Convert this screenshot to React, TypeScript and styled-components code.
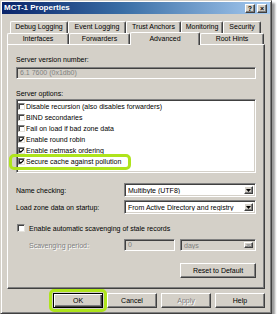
import React from 'react';
import styled, { createGlobalStyle, css } from 'styled-components';

const Global = createGlobalStyle`
  html, body { margin: 0; padding: 0; background: #ffffff; }
  body {
    font-family: "Liberation Sans", Arial, sans-serif;
    font-size: 7px;
    color: #000;
  }
  * { box-sizing: border-box; }
`;

const FACE = '#d4d0c8';
const GREEN = '#aee41c';

const raised = css`
  border: 1px solid;
  border-color: #ffffff #404040 #404040 #ffffff;
  box-shadow: inset -1px -1px #808080;
`;

const sunken = css`
  border: 1px solid;
  border-color: #808080 #ffffff #ffffff #808080;
  box-shadow: inset 1px 1px #404040, inset -1px -1px ${FACE};
`;

const Window = styled.div`
  width: 272px;
  height: 314px;
  background: ${FACE};
  border: 1px solid;
  border-color: ${FACE} #404040 #404040 ${FACE};
  box-shadow: inset 1px 1px #fff, inset -1px -1px #808080, 3px 3px 2px rgba(0, 0, 0, 0.4);
  padding: 1px;
  display: flex;
  flex-direction: column;
`;

const TitleBar = styled.div`
  height: 12px;
  display: flex;
  align-items: center;
  padding: 0 3px 0 2px;
  background: linear-gradient(90deg, #0a246a 0%, #3a6ea5 45%, #a6caf0 100%);
`;

const Title = styled.div`
  flex: 1;
  color: #fff;
  font-weight: bold;
  font-size: 8px;
  line-height: 12px;
  white-space: nowrap;
`;

const CaptionButton = styled.div<{ $gap?: number }>`
  ${raised};
  width: 10px;
  height: 9px;
  margin-left: ${(p) => p.$gap ?? 0}px;
  background: ${FACE};
  display: flex;
  align-items: center;
  justify-content: center;
  font-weight: bold;
  font-size: 7px;
  line-height: 7px;
  color: #000;
`;

const Body = styled.div`
  margin-left: 5px;
  width: 258px;
  display: flex;
  flex-direction: column;
`;

const BackRow = styled.div`
  margin-top: 7px;
  height: 12px;
  display: flex;
  padding-left: 3px;
`;

const FrontRow = styled.div`
  height: 11px;
  display: flex;
  align-items: flex-end;
  position: relative;
  z-index: 2;
`;

const Tab = styled.div<{ $w: number; $h: number; $selected?: boolean }>`
  width: ${(p) => p.$w}px;
  height: ${(p) => p.$h}px;
  flex: none;
  background: ${FACE};
  border-top: 1px solid #fff;
  border-left: 1px solid #fff;
  border-right: 1px solid #404040;
  box-shadow: inset -1px 0 #808080;
  border-radius: 2px 2px 0 0;
  text-align: center;
  line-height: ${(p) => p.$h - 2}px;
  white-space: nowrap;
  ${(p) =>
    p.$selected &&
    css`
      margin-bottom: -1px;
      position: relative;
      z-index: 3;
    `}
`;

const Panel = styled.div`
  height: 245px;
  border: 1px solid;
  border-color: #fff #404040 #404040 #fff;
  box-shadow: inset -1px -1px #808080;
  padding: 10px 8px 0 8px;
  display: flex;
  flex-direction: column;
`;

const Label = styled.div<{ $mt?: number; $disabled?: boolean }>`
  margin-top: ${(p) => p.$mt ?? 0}px;
  line-height: 9px;
  height: 9px;
  white-space: nowrap;
  ${(p) =>
    p.$disabled &&
    css`
      color: #808080;
      text-shadow: 1px 1px #fff;
    `}
`;

const ReadOnlyBox = styled.div`
  ${sunken};
  margin-top: 3px;
  height: 12px;
  background: ${FACE};
  color: #808080;
  padding-left: 3px;
  line-height: 10px;
`;

const ListBox = styled.div`
  ${sunken};
  margin-top: 1px;
  height: 74px;
  background: #fff;
  padding-top: 1px;
  display: flex;
  flex-direction: column;
`;

const ListItem = styled.div`
  position: relative;
  height: 11px;
  display: flex;
  align-items: center;
  gap: 1px;
  padding-left: 1px;
  white-space: nowrap;
`;

const Check = styled.div<{ $size: number }>`
  width: ${(p) => p.$size}px;
  height: ${(p) => p.$size}px;
  flex: none;
  background: #fff;
  border: 1px solid;
  border-color: #808080 #e4e2dc #e4e2dc #808080;
  box-shadow: inset 1px 1px #404040;
  display: flex;
  align-items: center;
  justify-content: center;
`;

const Highlight = styled.div<{ $t: number; $l: number; $w: number; $h: number }>`
  position: absolute;
  top: ${(p) => p.$t}px;
  left: ${(p) => p.$l}px;
  width: ${(p) => p.$w}px;
  height: ${(p) => p.$h}px;
  border: 3px solid ${GREEN};
  border-radius: 5px;
  pointer-events: none;
`;

const FieldRow = styled.div<{ $mt: number; $h: number }>`
  margin-top: ${(p) => p.$mt}px;
  height: ${(p) => p.$h}px;
  display: flex;
  align-items: center;
`;

const FieldLabel = styled.div<{ $disabled?: boolean; $indent?: number }>`
  width: 108px;
  flex: none;
  padding-left: ${(p) => p.$indent ?? 0}px;
  white-space: nowrap;
  ${(p) =>
    p.$disabled &&
    css`
      color: #808080;
      text-shadow: 1px 1px #fff;
    `}
`;

const Combo = styled.div<{ $disabled?: boolean; $w?: number }>`
  ${sunken};
  ${(p) => (p.$w ? `width: ${p.$w}px; flex: none;` : 'flex: 1;')}
  height: 100%;
  background: ${(p) => (p.$disabled ? FACE : '#fff')};
  color: ${(p) => (p.$disabled ? '#808080' : '#000')};
  display: flex;
  align-items: center;
  padding: 2px 2px 2px 3px;
  white-space: nowrap;
`;

const ComboText = styled.span`
  flex: 1;
  overflow: hidden;
`;

const DropButton = styled.div`
  ${raised};
  width: 9px;
  height: 100%;
  flex: none;
  background: ${FACE};
  display: flex;
  align-items: center;
  justify-content: center;
`;

const TextBox = styled.div<{ $w: number }>`
  ${sunken};
  width: ${(p) => p.$w}px;
  flex: none;
  height: 100%;
  background: ${FACE};
  color: #808080;
  padding-left: 3px;
  line-height: 10px;
  margin-right: 5px;
`;

const CheckRow = styled.div`
  margin-top: 9px;
  height: 10px;
  display: flex;
  align-items: center;
  gap: 4px;
  padding-left: 1px;
  white-space: nowrap;
`;

const Button = styled.div<{ $w: number; $disabled?: boolean; $default?: boolean }>`
  position: relative;
  width: ${(p) => p.$w}px;
  height: 15px;
  flex: none;
  background: ${FACE};
  border: 1px solid;
  border-color: #fff #404040 #404040 #fff;
  box-shadow: inset -1px -1px #808080;
  display: flex;
  align-items: center;
  justify-content: center;
  white-space: nowrap;
  ${(p) =>
    p.$disabled &&
    css`
      color: #808080;
      text-shadow: 1px 1px #fff;
    `}
  ${(p) =>
    p.$default &&
    css`
      border: 1px solid #000;
      box-shadow: inset 1px 1px #fff, inset -1px -1px #404040, inset -2px -2px #808080;
    `}
`;

const ResetButton = styled(Button)`
  margin-top: 12px;
  align-self: flex-end;
`;

const ButtonRow = styled.div`
  margin-top: 4px;
  display: flex;
  justify-content: flex-end;
  gap: 4px;
`;

const Tick = () => (
  <svg width="6" height="6" viewBox="0 0 7 7">
    <path d="M0.5 3 L2.5 5 L6.5 1" stroke="#000" strokeWidth="1.6" fill="none" />
  </svg>
);

const Arrow = ({ color = '#000' }: { color?: string }) => (
  <svg width="5" height="3" viewBox="0 0 5 3">
    <path d="M0 0 H5 L2.5 3 Z" fill={color} />
  </svg>
);

const backTabs: [string, number][] = [
  ['Debug Logging', 58],
  ['Event Logging', 58],
  ['Trust Anchors', 55],
  ['Monitoring', 42],
  ['Security', 38],
];

const frontTabs: [string, number, boolean][] = [
  ['Interfaces', 62, false],
  ['Forwarders', 61, false],
  ['Advanced', 70, true],
  ['Root Hints', 64, false],
];

const options: [string, boolean][] = [
  ['Disable recursion (also disables forwarders)', false],
  ['BIND secondaries', false],
  ['Fail on load if bad zone data', false],
  ['Enable round robin', true],
  ['Enable netmask ordering', true],
  ['Secure cache against pollution', true],
];

export default function App() {
  return (
    <>
      <Global />
      <Window>
        <TitleBar>
          <Title>MCT-1 Properties</Title>
          <CaptionButton>?</CaptionButton>
          <CaptionButton $gap={2}>×</CaptionButton>
        </TitleBar>
        <Body>
          <BackRow>
            {backTabs.map(([t, w]) => (
              <Tab key={t} $w={w} $h={12}>
                {t}
              </Tab>
            ))}
          </BackRow>
          <FrontRow>
            {frontTabs.map(([t, w, sel]) => (
              <Tab key={t} $w={w} $h={sel ? 13 : 11} $selected={sel}>
                {t}
              </Tab>
            ))}
          </FrontRow>
          <Panel>
            <Label>Server version number:</Label>
            <ReadOnlyBox>6.1 7600 (0x1db0)</ReadOnlyBox>
            <Label $mt={10}>Server options:</Label>
            <ListBox>
              {options.map(([t, on], i) => (
                <ListItem key={t}>
                  <Check $size={7}>{on && <Tick />}</Check>
                  {t}
                  {i === options.length - 1 && <Highlight $t={-2} $l={-8} $w={122} $h={16} />}
                </ListItem>
              ))}
            </ListBox>
            <FieldRow $mt={10} $h={14}>
              <FieldLabel>Name checking:</FieldLabel>
              <Combo>
                <ComboText>Multibyte (UTF8)</ComboText>
                <DropButton>
                  <Arrow />
                </DropButton>
              </Combo>
            </FieldRow>
            <FieldRow $mt={3} $h={14}>
              <FieldLabel>Load zone data on startup:</FieldLabel>
              <Combo>
                <ComboText>From Active Directory and registry</ComboText>
                <DropButton>
                  <Arrow />
                </DropButton>
              </Combo>
            </FieldRow>
            <CheckRow>
              <Check $size={8} />
              Enable automatic scavenging of stale records
            </CheckRow>
            <FieldRow $mt={6} $h={12}>
              <FieldLabel $disabled $indent={13}>
                Scavenging period:
              </FieldLabel>
              <TextBox $w={51}>0</TextBox>
              <Combo $disabled>
                <ComboText>days</ComboText>
                <DropButton>
                  <Arrow color="#a0a0a0" />
                </DropButton>
              </Combo>
            </FieldRow>
            <ResetButton $w={76}>Reset to Default</ResetButton>
          </Panel>
          <ButtonRow>
            <Button $w={50} $default>
              OK
              <Highlight $t={-5} $l={-5} $w={58} $h={23} />
            </Button>
            <Button $w={50}>Cancel</Button>
            <Button $w={50} $disabled>
              Apply
            </Button>
            <Button $w={50}>Help</Button>
          </ButtonRow>
        </Body>
      </Window>
    </>
  );
}
